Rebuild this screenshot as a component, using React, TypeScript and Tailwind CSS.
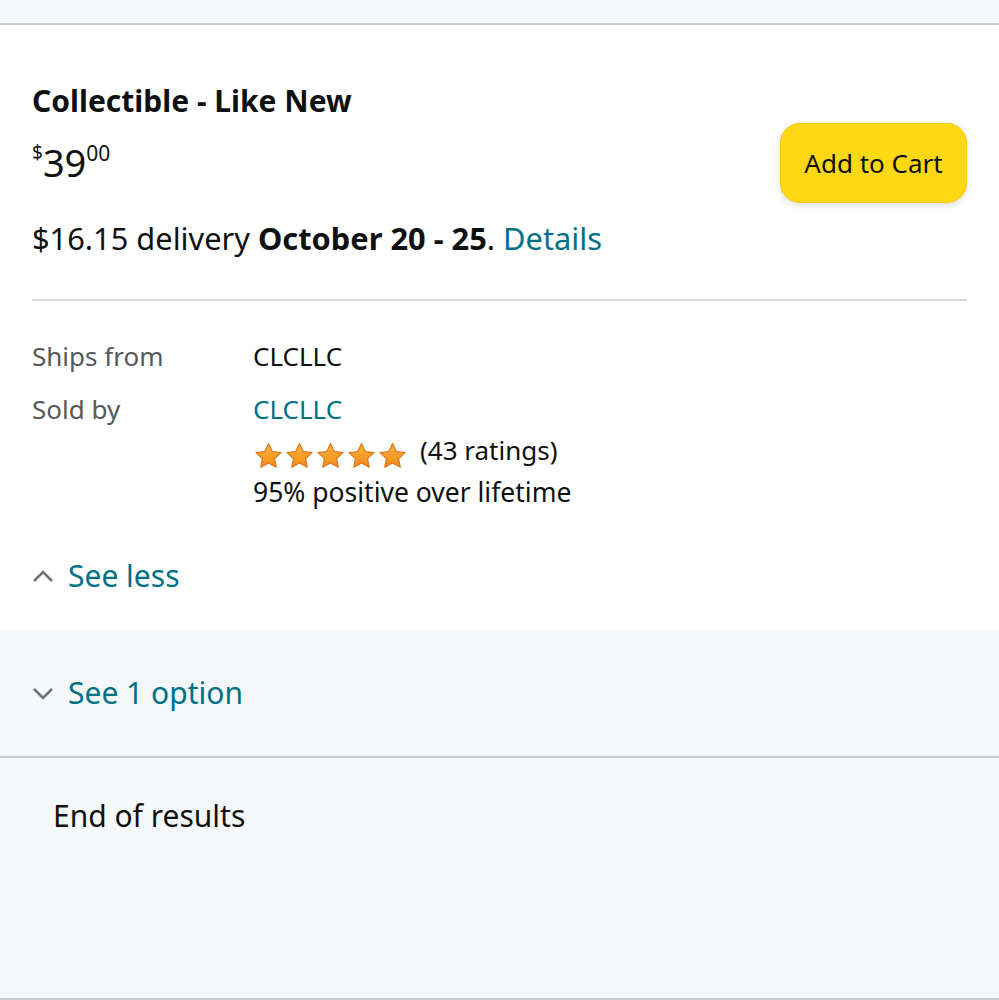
const Star = () => (
  <svg width="31" height="28" viewBox="0 0 24 23" className="shrink-0">
    <defs>
      <linearGradient id="sg" x1="0" y1="0" x2="0" y2="1">
        <stop offset="0" stopColor="#ffb13b" />
        <stop offset="1" stopColor="#f08b17" />
      </linearGradient>
    </defs>
    <path
      d="M12 1.2l3.1 6.6 7.2.9-5.3 5 1.4 7.1L12 17.3l-6.4 3.5L7 13.7l-5.3-5 7.2-.9z"
      fill="url(#sg)"
      stroke="#d9731a"
      strokeWidth="0.9"
      strokeLinejoin="round"
    />
  </svg>
);

const Chevron = ({ up }: { up?: boolean }) => (
  <svg width="22" height="16" viewBox="0 0 22 16" className="shrink-0">
    <polyline
      points={up ? "2,13 11,4 20,13" : "2,4 11,13 20,4"}
      fill="none"
      stroke="#6f7373"
      strokeWidth="2.6"
    />
  </svg>
);

const App = () => {
  return (
    <div
      className="w-[999px] h-[1000px] bg-[#f5f8f9] text-[#0f1111] overflow-hidden border-b-2 border-[#c9cccc]"
      style={{ fontFamily: '"Noto Sans", "Open Sans", Arial, sans-serif' }}
    >
      <div className="h-[25px] border-b-2 border-[#c9cccc]" />

      {/* offer card */}
      <div className="bg-white px-8 pt-[58px] h-[605px]">
        <div className="flex justify-between items-start">
          <div>
            <h2 className="text-[30px] font-bold leading-[36px]">Collectible - Like New</h2>
            <div className="flex items-start mt-[21px] h-[44px]">
              <span className="text-[19px] leading-[20px] mt-[2px]">$</span>
              <span className="text-[38px] leading-[44px]">39</span>
              <span className="text-[21px] leading-[20px] mt-[3px]">00</span>
            </div>
          </div>
          <button className="mt-[40px] w-[187px] h-[80px] rounded-[20px] bg-[#ffd814] border border-[#f7ca00] shadow-[0_2px_6px_rgba(15,17,17,0.15)] text-[26px]">
            Add to Cart
          </button>
        </div>
        <p className="text-[30.8px] leading-[40px] mt-[15px]">
          $16.15 delivery <span className="font-bold">October 20 - 25</span>.{" "}
          <span className="text-[#007185]">Details</span>
        </p>
        <div className="border-t-2 border-[#d5d9d9] mt-[41px]" />

        <div className="grid grid-cols-[221px_1fr] mt-[38px] text-[26px] leading-[34px]">
          <span className="text-[#565959]">Ships from</span>
          <span>CLCLLC</span>
          <span className="text-[#565959] mt-[19px]">Sold by</span>
          <div className="mt-[19px]">
            <div className="text-[#007185]">CLCLLC</div>
            <div className="flex items-start gap-[12px] mt-[7px]">
              <div className="flex mt-[9px]">
                <Star />
                <Star />
                <Star />
                <Star />
                <Star />
              </div>
              <span>(43 ratings)</span>
            </div>
            <div className="mt-[5px] text-[26.5px]">95% positive over lifetime</div>
          </div>
        </div>

        <div className="flex items-center gap-[14px] mt-[49px]">
          <Chevron up />
          <span className="text-[30px] text-[#007185] leading-[36px]">See less</span>
        </div>
      </div>

      {/* collapsed option */}
      <div className="h-[128px] border-b-2 border-[#c9cccc] px-8 flex items-center">
        <div className="flex items-center gap-[14px]">
          <Chevron />
          <span className="text-[30px] text-[#007185] leading-[36px]">See 1 option</span>
        </div>
      </div>

      <div className="px-[53px] pt-[40px] text-[30px] leading-[36px]">End of results</div>
    </div>
  );
};

export default App;
